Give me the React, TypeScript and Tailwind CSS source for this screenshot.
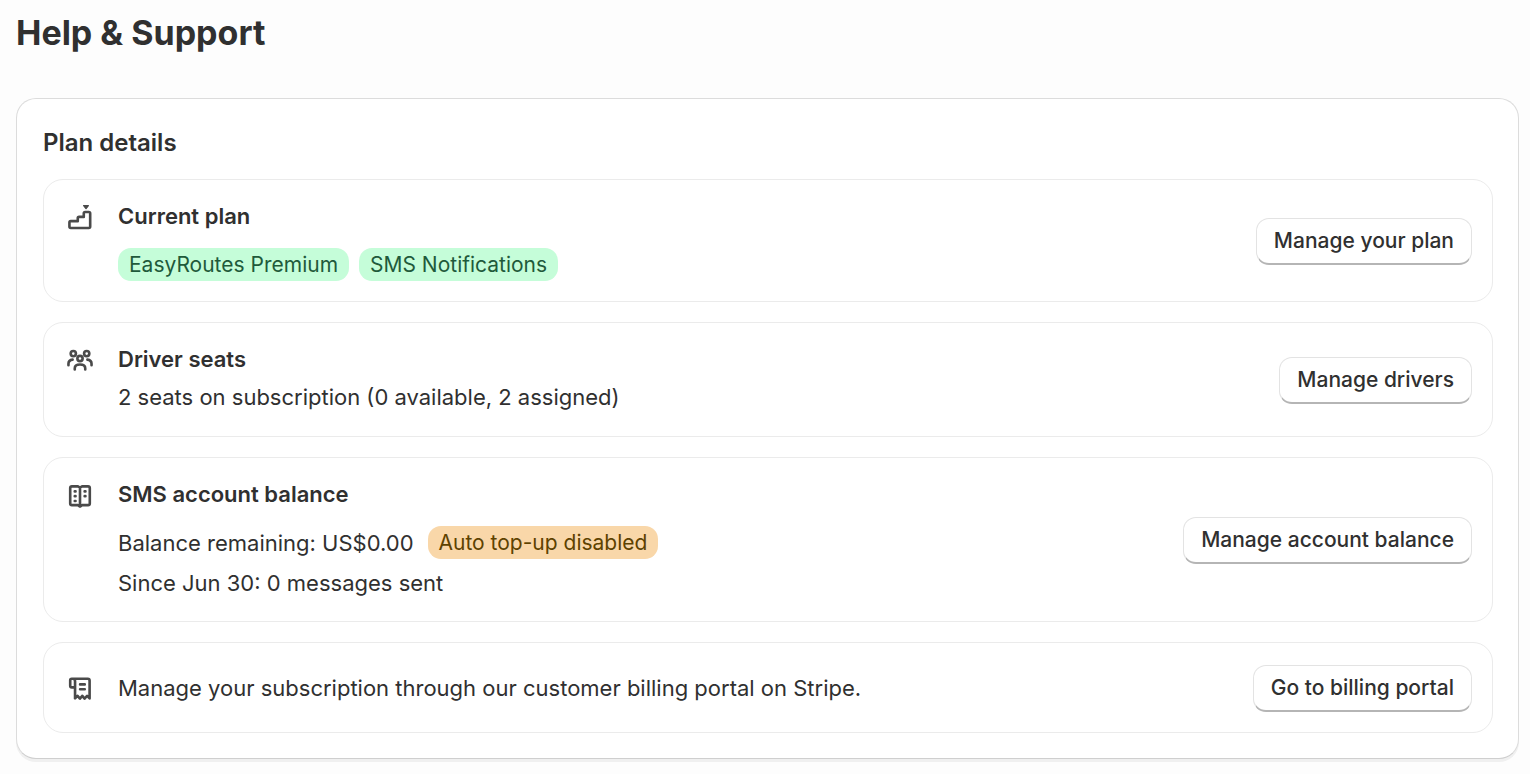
import { FC, ReactNode } from 'react';

interface PlanRowProps {
  icon: ReactNode;
  action: string;
  children: ReactNode;
}

const iconProps = {
  viewBox: '0 0 33 33',
  fill: 'none',
  stroke: 'currentColor',
  strokeWidth: 2.7,
  strokeLinejoin: 'round' as const,
  strokeLinecap: 'round' as const,
  'aria-hidden': true,
  className: 'size-8 shrink-0 text-[#4a4a4a]',
};

const StairsIcon = () => (
  <svg {...iconProps}>
    <path d="M5.6 22.2v4.2q0 1.4 1.4 1.4h18.6q1.4 0 1.4-1.4V12.8q0-1.4-1.4-1.4h-3.8q-1.4 0-1.4 1.4v3.6h-4.8q-1.4 0-1.4 1.4v3H7q-1.4 0-1.4 1.4Z" />
    <path d="M20.3 4.8h4.8l-2.4 3Z" fill="currentColor" strokeWidth={1.4} />
  </svg>
);

const TeamIcon = () => (
  <svg {...iconProps}>
    <circle cx="9.6" cy="9.9" r="2.7" />
    <circle cx="23.4" cy="9.9" r="2.7" />
    <circle cx="16.5" cy="15" r="2.7" />
    <path d="M4.6 21.9v-1.6q0-3.6 4.3-4.2M28.4 21.9v-1.6q0-3.6-4.3-4.2M11.1 26.2v-1.2c0-2.4 2-3.9 5.4-3.9s5.4 1.5 5.4 3.9v1.2" />
  </svg>
);

const BookIcon = () => (
  <svg {...iconProps}>
    <path d="M16.5 8.8 14.4 7.6H8.2q-1.8 0-1.8 1.8v15.8q0 1.8 1.8 1.8h6.2l2.1 1.4 2.1-1.4h6.2q1.8 0 1.8-1.8V9.4q0-1.8-1.8-1.8h-6.2ZM16.5 8.8v19.2" />
    <path d="M11.1 12.8h.8M11.1 17.7h.8M11.1 22.7h.8M21.3 12.8h.8M21.3 17.7h.8" />
  </svg>
);

const ReceiptIcon = () => (
  <svg {...iconProps}>
    <path d="M11.4 15.9H8q-1.6 0-1.6-1.6V8.6Q6.4 7 8 7h16.6q1.8 0 1.8 1.8v18.4l-2.6-2.6-2.6 2.8-2.3-2.8-2.5 2.8-2.4-2.8-2.6 2.6V9.6Q11.4 7 9.1 7" />
    <path d="M16.6 12.8h4.8M16.6 17.8h4.8" />
  </svg>
);

const Badge: FC<{ tone: string; children: ReactNode }> = ({ tone, children }) => (
  <span className={`rounded-[13px] px-[11px] text-[21px] leading-[33px] ${tone}`}>{children}</span>
);

const PlanRow: FC<PlanRowProps> = ({ icon, action, children }) => (
  <section className="flex min-h-[91px] items-center justify-between gap-5 rounded-[20px] border border-[#ebebeb] px-5 pt-[21px] pb-5">
    <div className="flex gap-[22px] text-[22px] leading-8">
      {icon}
      <div>{children}</div>
    </div>
    <button
      type="button"
      className="h-[47px] shrink-0 rounded-[13px] border border-b-2 border-[#e3e3e3] border-b-[#b5b5b5] bg-white px-[17px] text-[21px] font-medium"
    >
      {action}
    </button>
  </section>
);

const App: FC = () => {
  const green = 'bg-[#c5fdd9] text-[#1f5a3b]';
  const orange = 'bg-[#f9d7a9] text-[#5e4200]';

  return (
    <main className="min-h-screen bg-[#fdfdfd] pt-3 pr-[11px] pb-3 pl-4 font-[Inter,sans-serif] text-[#303030]">
      <h1 className="text-[34px] leading-[42px] font-bold">Help &amp; Support</h1>

      <div className="mt-11 rounded-[20px] border border-[#dcdcdc] border-b-[#cfcfcf] bg-white pt-7 pr-[25px] pb-[25px] pl-[26px] shadow-[0_3px_0_#f0f0f0]">
        <h2 className="text-2xl leading-8 font-semibold">Plan details</h2>

        <div className="mt-5 flex flex-col gap-5">
          <PlanRow icon={<StairsIcon />} action="Manage your plan">
            <h3 className="leading-[30px] font-semibold">Current plan</h3>
            <div className="mt-[17px] flex flex-wrap gap-[10px]">
              <Badge tone={green}>EasyRoutes Premium</Badge>
              <Badge tone={green}>SMS Notifications</Badge>
            </div>
          </PlanRow>

          <PlanRow icon={<TeamIcon />} action="Manage drivers">
            <h3 className="leading-[30px] font-semibold">Driver seats</h3>
            <p className="mt-[7px] mb-[3px]">2 seats on subscription (0 available, 2 assigned)</p>
          </PlanRow>

          <PlanRow icon={<BookIcon />} action="Manage account balance">
            <h3 className="leading-[30px] font-semibold">SMS account balance</h3>
            <div className="mt-[17px] flex flex-wrap items-center gap-[14px]">
              <p>Balance remaining: US$0.00</p>
              <Badge tone={orange}>Auto top-up disabled</Badge>
            </div>
            <p className="mt-2 mb-[2px]">Since Jun 30: 0 messages sent</p>
          </PlanRow>

          <PlanRow icon={<ReceiptIcon />} action="Go to billing portal">
            <p>Manage your subscription through our customer billing portal on Stripe.</p>
          </PlanRow>
        </div>
      </div>
    </main>
  );
};

export default App;
